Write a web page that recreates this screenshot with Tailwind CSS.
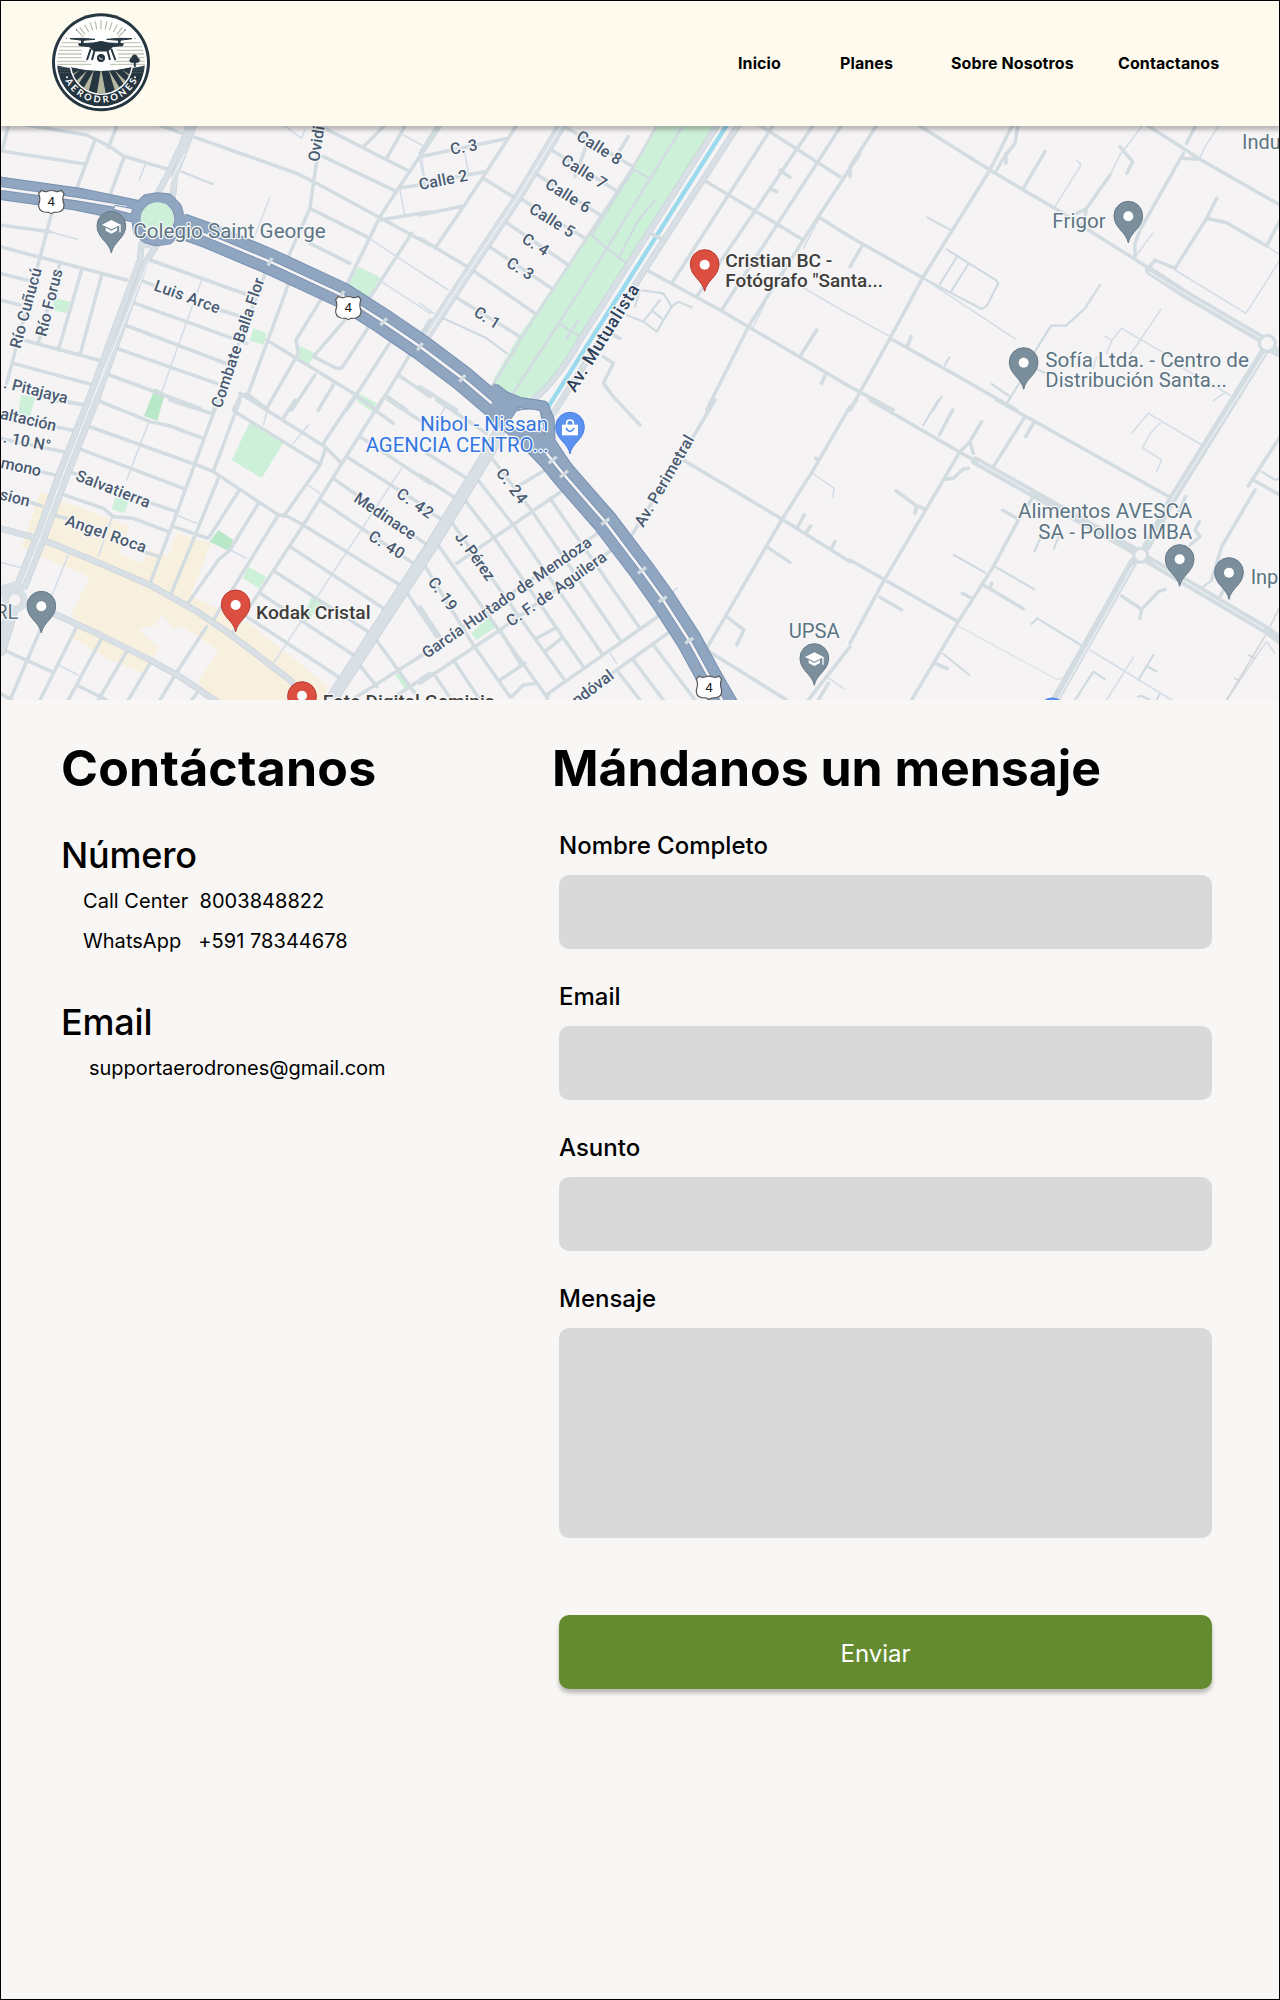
<!DOCTYPE html>
<html lang="es">
<head>
<meta charset="utf-8">
<title>Aerodrones - Contáctanos</title>
<script src="https://cdn.jsdelivr.net/npm/@tailwindcss/browser@4"></script>
</head>
<body class="bg-[#f8f7f5]">
<div class="relative flex flex-col w-[1280px] h-[2000px] overflow-hidden bg-[#f8f7f5] text-black font-['Inter',sans-serif] [font-optical-sizing:none]">

<header class="relative z-10 shrink-0 flex items-center h-[126px] bg-[#fefbee] pl-[51px] shadow-[0_4px_4px_rgba(0,0,0,0.25)]">
  <svg class="w-[100px] h-[100px]" viewBox="153 39 300 300" role="img" aria-label="Aerodrones">
    <defs>
      <clipPath id="disc"><circle cx="303" cy="187" r="132"/></clipPath>
      <clipPath id="field"><path d="M212 200Q300 222 396 200A93 93 0 0 1 212 200Z"/></clipPath>
      <path id="arc" d="M182 187A121 121 0 0 0 424 187"/>
    </defs>
    <circle cx="303" cy="187" r="147" fill="#263640"/>
    <circle cx="303" cy="187" r="138" fill="#fff"/>
    <g clip-path="url(#disc)">
      <path d="M150 128H235M370 128H460M150 140H250M360 140H460M150 151H245M350 151H460M150 162H245M355 162H460M150 173H245M355 173H460M150 184H260M345 184H460M150 193H275M330 193H460" stroke="#c5c8b6" stroke-width="4"/>
      <path d="M303 87V60M290 88L286 64M316 88L320 64M278 91L270 67M328 91L336 67M266 96L254 74M340 96L352 74M255 103L239 82M351 103L367 82M250 110L232 92M356 110L374 92" stroke="#b5b9a4" stroke-width="3.5"/>
      <path d="M160 194Q303 232 446 194V340H160Z" fill="#263640"/>
      <path d="M170 203H208M172 210H210M174 218H212M400 203H440M400 210H440M398 218H435" stroke="#718078" stroke-width="2" stroke-dasharray="4 3"/>
      <g clip-path="url(#field)">
        <path d="M200 190H400V290H200Z" fill="#263640"/>
        <path d="M303 205L289 290H319ZM282 210L236 290H262ZM326 210L350 290H376ZM262 211L200 270 218 280ZM344 211L388 280 405 270ZM240 210L200 232V242ZM366 210L405 242V232Z" fill="#b2b69f"/>
      </g>
      <path d="M212 203A93 93 0 0 0 396 203" fill="none" stroke="#fff" stroke-width="4.5"/>
      <path d="M208 199Q303 224 398 199" fill="none" stroke="#fff" stroke-width="3"/>
    </g>
    <path d="M175 232A136 136 0 0 0 431 232" fill="none" stroke="#fff" stroke-width="4"/>
    <g fill="#263640" stroke="#263640" stroke-linejoin="round">
      <path d="M210 116L248 121 285 118 248 115ZM320 118L358 121 396 116 358 115Z" stroke-width="3"/>
      <path d="M243 118H251V132H243ZM354 118H362V132H354Z" stroke="none"/>
      <path d="M236 131L280 129Q303 120 326 129L370 131 368 137 338 140Q330 152 318 153H288Q276 152 268 140L238 137Z" stroke-width="3"/>
      <path d="M272 147L261 180M284 150L276 180M334 147L346 180M322 150L330 180" fill="none" stroke-width="6"/>
      <circle cx="303" cy="174" r="11" stroke-width="3"/>
      <path d="M402 200V188Q388 190 389 181 389 175 394 175 395 165 404 164 413 165 413 174 420 175 419 182 418 189 407 188V200Z" stroke-width="1"/>
    </g>
    <path d="M298 172Q299 180 308 177" fill="none" stroke="#fff" stroke-width="3"/>
    <g fill="#263640"><circle cx="200" cy="115" r="1.5"/><circle cx="230" cy="90" r="2"/><circle cx="375" cy="90" r="2"/><circle cx="405" cy="115" r="1.5"/></g>
    <g fill="#fff"><circle cx="201" cy="232" r="3"/><circle cx="405" cy="232" r="3"/></g>
    <text font-family="Lato, sans-serif" font-weight="700" font-size="28" fill="#fff" text-anchor="middle"><textPath href="#arc" startOffset="50%" textLength="266" lengthAdjust="spacing">AERODRONES</textPath></text>
  </svg>
  <nav class="flex ml-[587px] text-[16px] leading-6 font-bold tracking-[0.1px] whitespace-nowrap">
    <a class="w-[102px]">Inicio</a>
    <a class="w-[111px]">Planes</a>
    <a class="w-[167px]">Sobre Nosotros</a>
    <a>Contactanos</a>
  </nav>
</header>

<svg class="block shrink-0 w-[1280px] h-[574px]" viewBox="0 126 1280 574" role="img" aria-label="Mapa">
<defs>
  <g id="pin"><path d="M0 82C-6 48-43 38-43 0A43 43 0 1 1 43 0C43 38 6 48 0 82Z" stroke-width="3"/></g>
  <g id="dot"><circle r="15" fill="#fff"/></g>
  <g id="cap" fill="#fff"><path d="M-28-3L0-17 28-3 0 11Z"/><path d="M-17 6L0 15 17 6V15L0 24-17 15Z"/><path d="M24-3H28V20H24Z"/></g>
  <g id="shield"><path d="M-30-34Q-22-28-12-31 0-36 12-31 22-28 30-34L38-24Q31-10 38 8 39 28 22 31L8 32 0 36-8 32-22 31Q-39 28-38 8-31-10-38-24Z" fill="#fff" stroke="#555" stroke-width="3.5"/><text y="14" font-size="40" font-weight="400" text-anchor="middle" fill="#222">4</text></g>
</defs>
<rect y="126" width="1280" height="574" fill="#f5f3f4"/>
<g transform="translate(0 120) scale(.33333)" font-family="Roboto, sans-serif">

<!-- commercial areas and parks -->
<path transform="translate(0 840)" fill="#f8f0df" d="M165 295L388 378 372 430 355 460 425 490 448 450 505 468 530 398 632 430 572 588 740 665 900 790 985 860 960 910H640L595 845 655 750 540 675 525 690 485 645 470 675 415 685 440 710 478 740 460 780 425 820 330 780 215 712 235 690 215 640 268 532 125 470 65 440 120 275Z"/>
<g fill="#cdf0d8">
  <path d="M1075 440L1140 472 1105 535 1042 497ZM760 625L800 640 790 675 750 662ZM900 678L945 700 928 732 892 712ZM165 535L212 545 200 580 155 570ZM62 825L105 832 90 890 55 880ZM1080 822L1130 850 1115 875 1068 840Z"/>
  <path transform="translate(0 840)" d="M750 65L850 128 785 235 695 180ZM350 280L388 300 372 340 335 328ZM745 500L798 530 778 565 728 535ZM935 590L970 610 920 665 910 650ZM1200 815L1230 860 1215 868 1185 825Z"/>
  <path transform="translate(1260 0)" d="M725 0H897L475 680Q390 830 300 838L235 815 222 775 295 650 345 580 640 140Z"/>
  <path transform="translate(1260 840)" d="M205 655L228 680 170 720 153 700Z"/>
  <path fill="#b8e8c7" d="M465 805L495 820 472 902 432 888ZM655 1230L700 1260 685 1292 628 1265Z"/>
</g>

<g fill="none" stroke-linejoin="round" stroke-linecap="round">
<!-- lanes -->
<g stroke="#d3dde6" stroke-width="4.5">
  <path d="M437 130L418 180M810 230L760 360M830 0L905 55 915 30M1265 110L1275 190M1200 210L1215 290M1100 350L1190 410 1290 475M1130 475L1290 580M1210 45L1265 75M605 480L480 830M150 335L230 358"/>
  <path transform="translate(0 840)" d="M1205 205L820 790M445 70L380 240M925 75L880 130M790 75L810 0M205 465L150 600M335 355L295 470M690 450L740 475M925 255L960 280M0 487L60 502M175 795L235 825M530 345L590 370"/>
  <path transform="translate(1260 0)" d="M0 455L85 510M0 550L40 580M1145 500L1290 585M1195 300L1150 385M1035 550L1000 620M135 100L145 160M0 120L12 180"/>
  <path transform="translate(1260 840)" d="M1180 222L1243 265 1238 290M755 578L772 563M1220 830L1270 865M570 760L590 790M75 20L55 60"/>
  <path transform="translate(2550 0)" d="M680 122Q695 130 690 140L615 260M875 20L810 105 780 165M1105 20L1065 80 1050 115M1250 378L1290 405M975 450L1188 580 1290 420M908 340L860 405M225 478L498 658M0 583L120 650M933 568L840 705M765 648L785 662 815 625 960 710M785 662L770 700M740 710L730 745M1090 842L1125 818M1000 745L1140 825"/>
  <path transform="translate(2550 840)" d="M895 40L1055 135M895 40L845 100M930 70L905 95 877 143 935 180 920 215M720 750L965 900M850 772L770 900M1130 900L1235 745 1250 725 1275 760"/>
  <path transform="translate(2550 840)" stroke="#e3e4e4" d="M325 678L620 838 640 835"/>
  <path transform="translate(2550 840)" stroke="#d2d3d6" d="M1290 620L1250 700 1130 900M1195 765L1215 775M1155 835L1168 842M1240 690L1290 715"/>
</g>
<g stroke="#d0dae1" stroke-width="6.5">
  <path d="M545 155L638 192"/>
  <path transform="translate(1260 0)" d="M70 595L200 655 260 700M640 148L695 178M640 150L515 345 560 385 620 430M705 240L655 300 595 415M415 610L490 655M475 600L440 655M660 510L730 520 755 560 710 635 670 605 720 540M755 560L775 545 815 562M700 575L725 595M620 585L670 605M660 510L645 560"/>
  <path transform="translate(2550 0)" d="M232 292L305 332M220 475L395 567Q405 565 412 555L445 490 440 482 290 388M322 408L270 492M355 432L305 512M298 712L285 735M750 495L705 565 648 617H603L555 695M425 792L480 830M520 770L470 850M555 745L585 758M275 830L250 870"/>
  <path transform="translate(2550 840)" d="M265 0L220 75M312 465L405 518M435 500L552 567M545 672L562 655 697 738M280 762L358 825M910 765L865 840M890 798L920 815M765 838L730 815 675 900M865 890L875 888 900 900M930 880L920 900M575 405L553 455M630 400L612 445M1085 540L1060 560M1235 215L1275 240 1290 235"/>
</g>
<!-- streets -->
<g stroke="#d3dce1" stroke-width="10.5">
  <path d="M30 0L8 85M0 92L255 132M50 10L260 45 330 80 370 108 505 148M350 20L325 82M283 65L230 205M372 112L330 225M440 0L545 40M585 52L890 160 950 190 1290 375M970 0L940 190 930 265 865 410M975 25L1220 150M970 110L1190 215M1150 20L1090 80M1225 0L1160 115M1320 20L1195 205 1140 290 1040 495M1195 205L1290 190M1140 300L1290 275M930 265L1100 350M930 370L1050 430M1235 340L1105 540"/>
  <path d="M155 280L115 430 20 790M0 315L150 335M0 380L380 480M0 460L100 485M0 540L60 555M180 430L115 670M245 450L175 690M305 465L240 705M70 660L295 720M40 730L280 795 M180 840L250 855M450 420L745 525M420 480L470 500M660 570L740 595M400 548L740 670M375 615L690 735M350 685L650 790M320 762L600 865M290 840L350 865M800 450L640 870M868 485L745 820 720 830 700 870M745 825L800 865M800 660L1060 820 1130 870M965 535L888 660 895 700 800 865M1035 600L940 710 1010 745H1025L1110 615M945 765L875 870M1000 795L955 870M1175 660L1040 870M1235 695L1130 870M1195 765L1290 830M1155 825L1220 870M1290 600L1265 640"/>
  <path transform="translate(0 840)" d="M150 0L240 12M165 80L215 90M0 115L190 155M120 215L165 225M85 305L125 318M290 0L450 65 510 78 610 115M510 0L640 42M655 0L530 340 450 550M720 0L640 215M655 235L510 590M255 75L590 195 640 215M235 145L550 265M205 215L240 225M440 305L530 335M180 280L310 325 340 350 400 355 505 395M160 345L200 355M430 455L480 470M520 380L625 415 715 275M640 215L835 345H855L910 375 1200 555M775 310L690 450 655 480 560 615M835 345L640 660M1070 -20L970 130 975 150 960 195 850 350M1145 0L910 375 690 710M705 35L955 190M720 -20L975 140 1020 185M885 0L850 55"/>
  <path transform="translate(0 840)" d="M1040 170L1290 330M1000 235L1275 430M960 300L1240 490M870 440L1150 625M825 515L1105 695M780 580L1060 765M740 650L1015 830M1080 110L1290 250M1125 30L1180 70M1165 0L1290 80M125 680L30 900M230 680L120 900M305 715L205 900M380 755L295 900M450 790L385 900M0 745L155 815M230 855L320 900M0 880L35 900M620 680L525 825 480 900M590 880L575 900M1215 570L1310 710M1125 715L1245 880M1075 790L1130 860M1055 900L1290 750M1170 900L1290 820"/>
  <path transform="translate(1260 0)" d="M300 0L190 170 130 260 45 385M265 55L0 110M195 155L0 190M130 258L0 285M190 175L295 240M0 355L150 445 345 580M395 90L585 210M345 160L540 285M300 235L495 355M255 305L445 435M205 378L395 505M105 530L300 650M400 0L640 140M505 60L465 170M625 50L600 90M50 20L0 100M1010 10L1260 170M1070 0L755 490M1190 0L830 530M1275 0L905 570M1320 100L1195 290 1150 360 985 620 860 870M860 185L1150 360M1195 290L1290 350M680 450L900 570 1290 800M1080 150L1110 172M1050 205L1070 215M1190 630L1140 710M1215 765L1205 790M550 710L580 730 550 790 580 830 660 915M550 630L600 655M0 800L110 870"/>
  <path transform="translate(1260 0)" stroke-width="8" d="M720 0L640 140 345 590 215 800M800 0L520 450 270 835"/>
  <path transform="translate(1260 840)" d="M50 0L200 100M20 160L140 235M0 225L100 290M0 320L60 355M220 180L330 325 600 720M170 235L280 375 545 760M130 295L220 410 490 800M90 360L430 835M50 430L380 890M10 490L160 735 270 890M0 620L60 710M390 295L660 685M375 210L300 255M430 270L110 490M540 395L0 770M575 450L240 690 0 850M720 645L385 880 380 900M750 695L590 810 520 860M640 780L730 900M700 735L825 900M590 810L660 900M240 690L300 790M315 790L240 840M350 850L310 855 275 890M100 780L180 900M40 820L95 900M405 685L350 715M425 715L380 750"/>
  <path transform="translate(1260 840)" d="M885 0L820 110 635 405M790 180L1090 360 1290 485M1290 20L1180 210 1085 360 860 745M860 750L1100 900M1187 175L1195 180M1153 345L1130 385M1172 378L1160 395M1245 425L1235 445M1040 440L1110 487M920 650L972 690 950 735M1290 740L1220 830 1165 900M1225 850L1195 900"/>
  <path transform="translate(2550 0)" d="M90 0L0 140V170M205 15L420 150 520 210 640 280 715 330 890 440M495 0L420 150 220 470 120 655 0 870M505 10L495 70 460 115 440 150M468 100V130M585 95L520 205M780 165L710 265 680 280M710 265L700 310M810 80L848 125 830 160M890 15L1000 85 1050 118 1290 255M1035 20L1010 70M1000 100L870 330 855 370V410M1000 115L1050 118M1100 235L1070 295 975 445 915 420 895 445M1070 295L1130 308 1250 378 1290 300M0 350L220 475M35 380L0 440M120 655L300 755 500 870M183 650L172 680M0 800L130 870"/>
  <path transform="translate(2550 840)" d="M60 0L370 180M20 0L0 30M308 30L268 105M395 65L360 125 330 155M360 125L370 160M330 155L100 545 0 730M355 205L340 207 310 235 285 238M138 272L200 318 228 328M200 318L195 340M440 0L520 45 965 295M525 50L430 200M550 70L527 110M0 480L325 665M90 592L155 630M550 290L505 360 430 500 325 665 185 900M458 330L505 358M400 555L520 626M425 550L420 565M337 580L365 595M255 790L292 806M815 588L875 628 925 575 945 568M875 628L870 655M1215 270L1115 440 1085 540M1137 540L1110 590M1290 110L1195 258M1210 240L1290 285M1007 290L985 340M1048 365L1035 390 1050 410 1020 435"/>
</g>
<!-- avenues -->
<g id="avenues">
  <g stroke="#c3ced6">
    <path stroke-width="19" d="M572 0L545 75 500 170 472 222M587 0L560 75 525 165 518 232M425 370L420 420 265 840 180 1055 110 1250 50 1400M470 375L435 430 290 840 200 1070 130 1260 75 1400"/>
    <path stroke-width="19" d="M0 1225L100 1252 150 1268 300 1330 450 1395 600 1480 700 1550 870 1680 940 1750M160 1480L300 1545 450 1620 540 1670 650 1745"/>
    <path stroke-width="38" d="M1500 930L1470 990 1290 1285 1000 1730M45 1440L0 1590"/>
    <path stroke-width="28" d="M1695 0L1622 120 1552 235 1412 445 1275 655"/>
    <path stroke-width="19" d="M2162 0L1740 660Q1680 770 1600 840M2225 0L1940 440 1660 880"/>
  </g>
  <g stroke="#d8e0e6">
    <path stroke-width="16" d="M572 0L545 75 500 170 472 222M587 0L560 75 525 165 518 232M425 370L420 420 265 840 180 1055 110 1250 50 1400M470 375L435 430 290 840 200 1070 130 1260 75 1400"/>
    <path stroke-width="16" d="M0 1225L100 1252 150 1268 300 1330 450 1395 600 1480 700 1550 870 1680 940 1750M160 1480L300 1545 450 1620 540 1670 650 1745"/>
    <path stroke-width="34" d="M1500 930L1470 990 1290 1285 1000 1730M45 1440L0 1590M0 1415L50 1400"/>
    <path stroke-width="25" d="M1695 0L1622 120 1552 235 1412 445 1275 655"/>
    <path stroke-width="16" d="M2162 0L1740 660Q1680 770 1600 840M2225 0L1940 440 1660 880"/>
    <circle cx="45" cy="1440" r="28" stroke-width="20"/>
  </g>
  <circle cx="45" cy="1440" r="17" fill="#f5f3f4"/>
  <path d="M555 100L512 185M447 420L278 840 190 1062 120 1255 75 1370" stroke="#f0f2f4" stroke-width="3.5"/>
  <path d="M1695 0L1622 120 1552 235 1412 445 1275 655" stroke="#f0f2f4" stroke-width="4"/>
  <path d="M2192 0L1650 850" stroke="#f5f3f4" stroke-width="20"/>
  <path d="M2190 0L1645 860" stroke="#9adaee" stroke-width="13"/>
  <path d="M1958 343L1985 357" stroke="#d3dce1" stroke-width="11"/>
  <path d="M425 375Q450 385 475 372" stroke="#d8e0e6" stroke-width="12"/>
  <g stroke="#d3dce1" stroke-width="26"><path d="M3448 452L3560 525 3790 660M3795 690L3515 1140 3440 1280M2925 1022L3400 1290M3400 1325L3160 1750M3445 1320L3800 1530 3840 1560M3820 690L3850 705"/></g>
  <g stroke="#eef1f3" stroke-width="3.5"><path d="M3448 457L3560 525 3780 653M3795 700L3515 1140M2935 1027L3090 1115M3400 1335L3170 1745M3460 1328L3790 1525"/></g>
  <g fill="#f5f3f4" stroke="#d3dce1" stroke-width="10"><circle cx="3802" cy="670" r="24"/><circle cx="3422" cy="1306" r="21"/></g>
</g>
<!-- highway 4 -->
<g stroke-linecap="butt">
  <g stroke="#7790b2">
    <path stroke-width="70" d="M-20 202L230 237 410 274"/>
    <path stroke-width="78" d="M545 318L620 345 810 425 1025 525 1150 605 1260 680 1387 775 1475 850 1590 950 1657 1020 1690 1062 1815 1205 1925 1350 1988 1438 2068 1562 2127 1670 2190 1780"/>
    <path stroke-width="32" d="M440 238L470 233 505 236 530 262 540 298 530 335 505 358 470 363 440 355 415 335 410 298 415 262Z"/>
    <path stroke-width="34" d="M1482 805L1515 830 1560 848 1630 858 1647 900 1650 965 1710 1055M1550 860L1505 925"/>
  </g>
  <g stroke="#8fa5c0">
    <path stroke-width="64" d="M-20 202L230 237 415 275"/>
    <path stroke-width="72" d="M535 314L620 345 810 425 1025 525 1150 605 1260 680 1387 775 1475 850 1590 950 1657 1020 1690 1062 1815 1205 1925 1350 1988 1438 2068 1562 2127 1670 2190 1780"/>
    <path stroke-width="27" d="M440 238L470 233 505 236 530 262 540 298 530 335 505 358 470 363 440 355 415 335 410 298 415 262Z"/>
    <path stroke-width="28" d="M1475 800L1515 830 1560 848 1630 858 1647 900 1650 965 1710 1055M1550 860L1505 925"/>
  </g>
  <path stroke="#7790b2" stroke-width="13" d="M0 205L230 237 380 262M610 342L810 425 1025 525 1150 605 1260 680 1387 775 1475 850M1640 1000L1690 1062 1815 1205 1925 1350 1988 1438 2068 1562 2127 1670 2180 1765"/>
  <path stroke="#f5f3f4" stroke-width="8" d="M0 205L230 237 380 262M610 342L810 425 1025 525 1150 605 1260 680 1387 775 1475 850M1640 1000L1690 1062 1815 1205 1925 1350 1988 1438 2068 1562 2127 1670 2180 1765"/>
  <path fill="#f5f3f4" stroke="#7790b2" stroke-width="3" d="M345 256L398 266 394 282 340 268Z"/>
  <path fill="#f5f3f4" stroke="#7790b2" stroke-width="3" d="M1520 915L1550 872Q1590 862 1620 872L1632 925Q1570 945 1520 915Z"/>
  <circle cx="472" cy="297" r="50" fill="#cdf0d8"/>
  <path stroke="#d3dce1" stroke-width="10" d="M804 436L816 414M1018 537L1032 513M1141 615L1161 595M1252 691L1268 669M1378 785L1396 765M1646 1030L1670 1010M1680 1072L1704 1052M1804 1214L1828 1196M1914 1360L1938 1342M1976 1446L2000 1430M2056 1570L2080 1554"/>
</g>
</g>

<!-- street names -->
<g transform="translate(-1 0)" font-size="48" font-weight="500" fill="#4a5a70" stroke="#f7f8fa" stroke-width="8" stroke-linejoin="round" paint-order="stroke">
  <text transform="translate(460 510) rotate(20)" textLength="207">Luis Arce</text>
  <text transform="translate(665 867) rotate(-71.5)" textLength="408">Combate Balla Flor</text>
  <text transform="translate(62 688) rotate(-75)" textLength="248">Río Cuñucú</text>
  <text transform="translate(139 652) rotate(-76)" textLength="207">Río Forus</text>
  <text transform="translate(200 851) rotate(14)" text-anchor="end">. Pitajaya</text>
  <text transform="translate(958 127) rotate(-81)">Ovidi</text>
  <g transform="translate(0 840)">
    <text transform="translate(166 94) rotate(13)" text-anchor="end">altación</text>
    <text transform="translate(150 154) rotate(11)" text-anchor="end">. 10 N°</text>
    <text transform="translate(121 229) rotate(12)" text-anchor="end">mono</text>
    <text transform="translate(86 320) rotate(14)" text-anchor="end">sion</text>
    <text transform="translate(225 240) rotate(21)" textLength="235">Salvatierra</text>
    <text transform="translate(194 374) rotate(19.5)" textLength="254">Angel Roca</text>
    <text transform="translate(1187 288) rotate(35)" textLength="122">C. 42</text>
    <text transform="translate(1059 302) rotate(34)" textLength="213">Medinace</text>
    <text transform="translate(1103 417) rotate(32)" textLength="117">C. 40</text>
  </g>
  <g transform="translate(1258 -3)">
    <text transform="translate(97 107) rotate(-10)" textLength="82">C. 3</text>
    <text transform="translate(3 213) rotate(-11)" textLength="148">Calle 2</text>
    <text transform="translate(469 60) rotate(32)" textLength="150">Calle 8</text>
    <text transform="translate(423 132) rotate(32)" textLength="150">Calle 7</text>
    <text transform="translate(375 204) rotate(32)" textLength="150">Calle 6</text>
    <text transform="translate(327 278) rotate(32)" textLength="150">Calle 5</text>
    <text transform="translate(305 368) rotate(32)" textLength="85">C. 4</text>
    <text transform="translate(259 440) rotate(32)" textLength="85">C. 3</text>
    <text transform="translate(161 588) rotate(32)" textLength="82">C. 1</text>
    <text transform="translate(468 822) rotate(-58)" textLength="368" font-size="53" fill="#2f4058">Av. Mutualista</text>
  </g>
  <g transform="translate(1258 838)">
    <text transform="translate(229 222) rotate(52)" textLength="120">C. 24</text>
    <text transform="translate(106 412) rotate(54)" textLength="168">J. Pérez</text>
    <text transform="translate(25 548) rotate(54)" textLength="112">C. 19</text>
    <text transform="translate(23 779) rotate(-34.5)" textLength="605">García Hurtado de Mendoza</text>
    <text transform="translate(276 684) rotate(-35)" textLength="355">C. F. de Aguilera</text>
    <text transform="translate(673 386) rotate(-60)" textLength="308">Av. Perimetral</text>
    <text transform="translate(588 835) rotate(-37)" text-anchor="end">ndóval</text>
  </g>
</g>

<!-- places -->
<g font-size="60" fill="#5d7482" stroke="#f8f9fa" stroke-width="7" stroke-linejoin="round" paint-order="stroke">
  <text x="400" y="354" textLength="577" lengthAdjust="spacingAndGlyphs">Colegio Saint George</text>
  <text x="55" y="1496" text-anchor="end">RL</text>
  <text x="2366" y="1553" textLength="153" lengthAdjust="spacingAndGlyphs">UPSA</text>
  <text x="3726" y="88">Indu</text>
  <text x="3157" y="323" textLength="160" lengthAdjust="spacingAndGlyphs">Frigor</text>
  <text x="3136" y="741" textLength="611" lengthAdjust="spacingAndGlyphs">Sofía Ltda. - Centro de</text>
  <text x="3136" y="801" textLength="545" lengthAdjust="spacingAndGlyphs">Distribución Santa...</text>
  <text x="3054" y="1194" textLength="523" lengthAdjust="spacingAndGlyphs">Alimentos AVESCA</text>
  <text x="3115" y="1256" textLength="462" lengthAdjust="spacingAndGlyphs">SA - Pollos IMBA</text>
  <text x="3752" y="1392">Inp</text>
  <g fill="#3576e0">
    <text x="1260" y="934" textLength="385" lengthAdjust="spacingAndGlyphs">Nibol - Nissan</text>
    <text x="1097" y="997" textLength="549" lengthAdjust="spacingAndGlyphs">AGENCIA CENTRO...</text>
  </g>
  <g fill="#413d3a" font-weight="500" font-size="57">
    <text x="768" y="1496" textLength="344" lengthAdjust="spacingAndGlyphs">Kodak Cristal</text>
    <text x="968" y="1763" textLength="516" lengthAdjust="spacingAndGlyphs">Foto Digital Geminis</text>
    <text x="2176" y="441" textLength="321" lengthAdjust="spacingAndGlyphs">Cristian BC -</text>
    <text x="2176" y="500" textLength="473" lengthAdjust="spacingAndGlyphs">Fotógrafo "Santa...</text>
  </g>
</g>

<g fill="#7b8e9b" stroke="#64798a">
  <use href="#pin" x="334" y="317"/><use href="#pin" x="124" y="1457"/><use href="#pin" x="2443" y="1614"/><use href="#pin" x="3385" y="287"/><use href="#pin" x="3071" y="726"/><use href="#pin" x="3539" y="1317"/><use href="#pin" x="3687" y="1356"/>
</g>
<g fill="#db4e40" stroke="#b93a30"><use href="#pin" x="707" y="1453"/><use href="#pin" x="906" y="1728"/><use href="#pin" x="2114" y="432"/></g>
<g fill="#5b92f0" stroke="#4b7fe0"><use href="#pin" x="1710" y="920"/><use href="#pin" x="3157" y="1777"/></g>
<use href="#cap" x="334" y="317"/><use href="#cap" x="2443" y="1614"/>
<use href="#dot" x="124" y="1459"/><use href="#dot" x="3385" y="289"/><use href="#dot" x="3071" y="728"/><use href="#dot" x="3539" y="1318"/><use href="#dot" x="3687" y="1358"/><use href="#dot" x="707" y="1455"/><use href="#dot" x="906" y="1727"/><use href="#dot" x="2114" y="434"/>
<g fill="none" stroke="#fff" stroke-width="5"><path d="M1700 915V908Q1701 900 1710 900 1719 900 1720 908V915"/><path d="M1686 914H1734V946H1686Z" fill="#fff" stroke="none"/><path d="M1698 924Q1710 944 1722 924" stroke="#5b92f0"/></g>
<use href="#shield" x="154" y="245"/><use href="#shield" x="1045" y="563"/><use href="#shield" x="2127" y="1702"/>
</g>
</svg>

<main class="flex grow">
  <section class="w-[552px] shrink-0 pl-[61px] pt-[38px]">
    <h1 class="text-[50px] leading-[60px] font-bold tracking-[0.2px]">Contáctanos</h1>
    <h2 class="mt-[35px] text-[36px] leading-[44px] font-medium tracking-[-0.2px]">Número</h2>
    <p class="mt-[12px] ml-[22px] text-[20px] leading-6 font-normal tracking-[0.04px] whitespace-pre">Call Center  8003848822</p>
    <p class="mt-[16px] ml-[22px] text-[20px] leading-6 font-normal tracking-[0.04px] whitespace-pre">WhatsApp   +591 78344678</p>
    <h2 class="mt-[47px] text-[36px] leading-[44px] font-medium tracking-[-0.2px]">Email</h2>
    <p class="mt-[12px] ml-[28px] text-[20px] leading-6 font-normal tracking-[-0.04px]">supportaerodrones@gmail.com</p>
  </section>
  <section class="w-[660px] pt-[38px]">
    <h1 class="text-[50px] leading-[60px] font-bold tracking-[-0.05px]">Mándanos un mensaje</h1>
    <form class="flex flex-col ml-[7px] mt-[33px] text-[24px] leading-[29px] font-medium">
      <label>Nombre Completo</label>
      <div class="mt-[15px] h-[74px] rounded-[10px] bg-[#d9d9d9]"></div>
      <label class="mt-[33px]">Email</label>
      <div class="mt-[15px] h-[74px] rounded-[10px] bg-[#d9d9d9]"></div>
      <label class="mt-[33px]">Asunto</label>
      <div class="mt-[15px] h-[74px] rounded-[10px] bg-[#d9d9d9]"></div>
      <label class="mt-[33px]">Mensaje</label>
      <div class="mt-[15px] h-[210px] rounded-[10px] bg-[#d9d9d9]"></div>
      <button type="button" class="mt-[77px] h-[74px] pt-[2px] pr-[20px] rounded-[10px] bg-[#648b2f] text-white font-normal shadow-[0_4px_4px_rgba(0,0,0,0.25)]">Enviar</button>
    </form>
  </section>
</main>
<div class="absolute inset-0 z-20 border border-black pointer-events-none"></div>
</div>
</body>
</html>
